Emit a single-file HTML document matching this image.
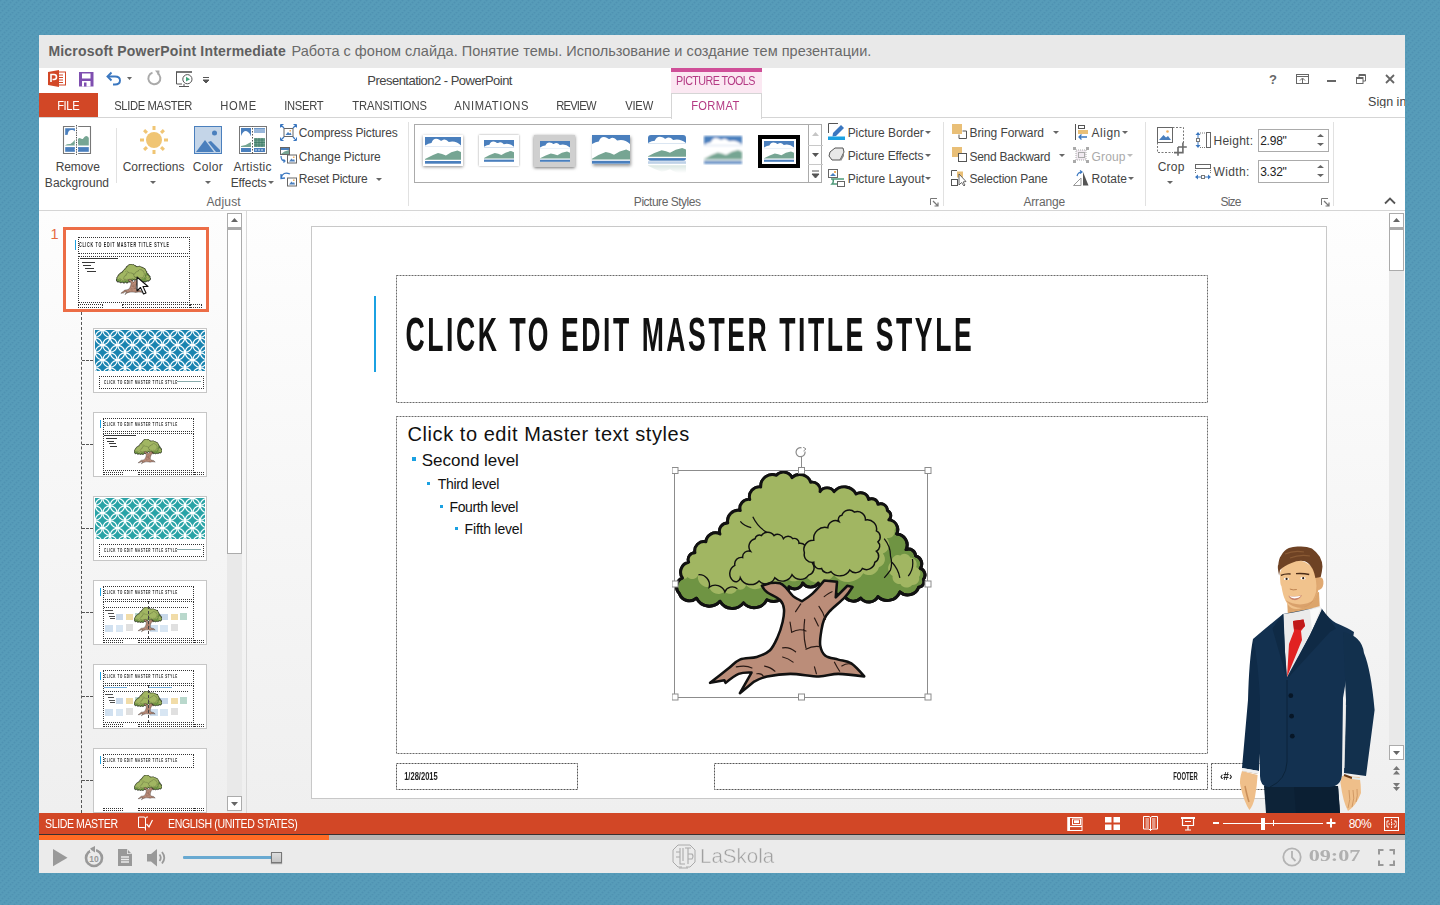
<!DOCTYPE html>
<html><head><meta charset="utf-8"><style>
html,body{margin:0;padding:0;}
body{width:1440px;height:905px;position:relative;overflow:hidden;font-family:"Liberation Sans",sans-serif;}
body>div,body>svg{position:absolute;}
.t{white-space:pre;}
</style></head><body>
<svg style="left:0px;top:0px;" width="1440" height="905" viewBox="0 0 1440 905"><defs><pattern id="bgp" x="0" y="0" width="6" height="6" patternUnits="userSpaceOnUse"><rect width="6" height="6" fill="#579cb9"/><circle cx="0.5" cy="0.5" r="1.05" fill="#4a8cae" opacity="0.6"/><circle cx="4.5" cy="2.5" r="1.05" fill="#4a8cae" opacity="0.6"/><circle cx="2.5" cy="4.5" r="1.05" fill="#4a8cae" opacity="0.6"/><circle cx="6.5" cy="0.5" r="1.05" fill="#4a8cae" opacity="0.6"/></pattern></defs><rect width="1440" height="905" fill="url(#bgp)"/></svg>
<div style="left:39px;top:35px;width:1366px;height:838px;background:#fff;"></div>
<div style="left:39px;top:35px;width:1366px;height:33px;background:#e9e9e9;"></div>
<div class="t" style="left:48.42px;top:44.10px;font-size:14px;line-height:14px;color:#5f5f5f;font-weight:bold;font-family:'Liberation Sans';letter-spacing:0.197px;">Microsoft PowerPoint Intermediate</div>
<div class="t" style="left:291.49px;top:43.67px;font-size:14.5px;line-height:14.5px;color:#6a6a6a;font-weight:normal;font-family:'Liberation Sans';letter-spacing:0.026px;">Работа с фоном слайда. Понятие темы. Использование и создание тем презентации.</div>
<div class="t" style="left:367.29px;top:73.95px;font-size:13px;line-height:13px;color:#444;font-weight:normal;font-family:'Liberation Sans';letter-spacing:-0.522px;">Presentation2 - PowerPoint</div>
<div style="left:671px;top:68px;width:91px;height:4px;background:#cf4f98;"></div>
<div style="left:671px;top:72px;width:91px;height:21px;background:#fbe8f2;"></div>
<div class="t" style="left:676.33px;top:75.17px;font-size:12.5px;line-height:12.5px;color:#b43a84;font-weight:normal;font-family:'Liberation Sans';letter-spacing:-0.671px;transform:scaleX(0.8600);transform-origin:0.88px 0;">PICTURE TOOLS</div>
<div style="left:39px;top:93px;width:59px;height:25px;background:#d24726;"></div>
<div class="t" style="left:57.09px;top:99.35px;font-size:13px;line-height:13px;color:#fff;font-weight:normal;font-family:'Liberation Sans';letter-spacing:-0.410px;transform:scaleX(0.8600);transform-origin:0.91px 0;">FILE</div>
<div style="left:39px;top:117px;width:1366px;height:1px;background:#d5d5d5;"></div>
<div class="t" style="left:114.09px;top:99.35px;font-size:13px;line-height:13px;color:#444;font-weight:normal;font-family:'Liberation Sans';letter-spacing:-0.390px;transform:scaleX(0.8600);transform-origin:0.91px 0;">SLIDE MASTER</div>
<div class="t" style="left:220.09px;top:99.35px;font-size:13px;line-height:13px;color:#444;font-weight:normal;font-family:'Liberation Sans';letter-spacing:0.979px;transform:scaleX(0.8600);transform-origin:0.91px 0;">HOME</div>
<div class="t" style="left:283.59px;top:99.35px;font-size:13px;line-height:13px;color:#444;font-weight:normal;font-family:'Liberation Sans';letter-spacing:-0.286px;transform:scaleX(0.8600);transform-origin:0.91px 0;">INSERT</div>
<div class="t" style="left:351.59px;top:99.35px;font-size:13px;line-height:13px;color:#444;font-weight:normal;font-family:'Liberation Sans';letter-spacing:-0.041px;transform:scaleX(0.8600);transform-origin:0.91px 0;">TRANSITIONS</div>
<div class="t" style="left:453.89px;top:99.35px;font-size:13px;line-height:13px;color:#444;font-weight:normal;font-family:'Liberation Sans';letter-spacing:0.726px;transform:scaleX(0.8600);transform-origin:0.91px 0;">ANIMATIONS</div>
<div class="t" style="left:556.49px;top:99.35px;font-size:13px;line-height:13px;color:#444;font-weight:normal;font-family:'Liberation Sans';letter-spacing:-0.872px;transform:scaleX(0.8600);transform-origin:0.91px 0;">REVIEW</div>
<div class="t" style="left:624.99px;top:99.35px;font-size:13px;line-height:13px;color:#444;font-weight:normal;font-family:'Liberation Sans';letter-spacing:-0.200px;transform:scaleX(0.8600);transform-origin:0.91px 0;">VIEW</div>
<div style="left:671px;top:93px;width:89px;height:25px;background:#fff;border:1px solid #d5d5d5;border-bottom:none;"></div>
<div class="t" style="left:691.49px;top:99.35px;font-size:13px;line-height:13px;color:#b43a84;font-weight:normal;font-family:'Liberation Sans';letter-spacing:0.417px;transform:scaleX(0.8600);transform-origin:0.91px 0;">FORMAT</div>
<div class="t" style="left:1368.12px;top:95.97px;font-size:12.5px;line-height:12.5px;color:#444;font-weight:normal;font-family:'Liberation Sans';width:36.9px;overflow:hidden;">Sign in</div>
<div style="left:39px;top:210px;width:1366px;height:1px;background:#d5d5d5;"></div>
<div style="left:39px;top:211px;width:208px;height:602px;background:linear-gradient(#fdfdfd,#efefef);"></div>
<div style="left:246px;top:211px;width:1px;height:602px;background:#d8d8d8;"></div>
<div style="left:247px;top:211px;width:1158px;height:602px;background:linear-gradient(#fefefe,#efefef);"></div>
<div style="left:311px;top:226px;width:1014px;height:571px;background:#fff;border:1px solid #c8c8c8;"></div>
<div style="left:39px;top:813px;width:1366px;height:21px;background:#d24726;"></div>
<div style="left:39px;top:834px;width:1366px;height:1px;background:#3a3030;"></div>
<div style="left:39px;top:835px;width:1366px;height:5px;background:#b8b6b4;"></div>
<div style="left:39px;top:835px;width:290px;height:5px;background:#ff6a23;"></div>
<div style="left:39px;top:840px;width:1366px;height:33px;background:#ebebeb;"></div>
<svg style="left:62px;top:125px;" width="30" height="31" viewBox="0 0 30 31"><g transform="translate(1,1)"><path d="M11.7 0.5 H0.5 V27.5 H11.7 M15.2 0.5 H27.5 V27.5 H15.2" fill="none" stroke="#777" stroke-width="1.1"/><path d="M2.2 2.2 H11.9 V5.3 Q10 3.5 8.6 4 Q5 3.8 4.7 8.8 L2.2 8.9Z" fill="#4a7fbd"/><path d="M2.2 19.6 L2.2 19.2 Q4 17.8 7.4 18 Q10 17 11.7 13.8 L11.9 19.6Z" fill="#76a593"/><path d="M15 19.6 L15 13 Q16 11.8 17.2 12.2 Q18.5 13.2 19.8 13 Q22 9.6 23.3 9.9 Q25.5 10.2 25.8 11.9 L25.8 19.6Z" fill="#76a593"/><rect x="2.2" y="21.1" width="9.7" height="4.7" fill="#4a7fbd"/><rect x="15" y="21.1" width="10.8" height="4.7" fill="#4a7fbd"/><circle cx="13.5" cy="18.5" r="1.8" fill="#fff"/><circle cx="13.5" cy="23.5" r="1.8" fill="#fff"/><line x1="13.5" y1="-1" x2="13.5" y2="29" stroke="#555" stroke-width="1" stroke-dasharray="1.4 1"/></g></svg>
<div class="t" style="left:55.66px;top:160.80px;font-size:12px;line-height:12px;color:#444;font-weight:normal;font-family:'Liberation Sans';letter-spacing:-0.102px;">Remove</div>
<div class="t" style="left:44.86px;top:177.10px;font-size:12px;line-height:12px;color:#444;font-weight:normal;font-family:'Liberation Sans';letter-spacing:0.015px;">Background</div>
<div style="left:116px;top:128px;width:1px;height:55px;background:#e1e1e1;"></div>
<svg style="left:140px;top:126px;" width="28" height="28" viewBox="0 0 28 28"><rect x="12.5" y="0" width="3" height="4" fill="#f0c574" transform="rotate(0 14 14)"/><rect x="12.5" y="0" width="3" height="4" fill="#f0c574" transform="rotate(45 14 14)"/><rect x="12.5" y="0" width="3" height="4" fill="#f0c574" transform="rotate(90 14 14)"/><rect x="12.5" y="0" width="3" height="4" fill="#f0c574" transform="rotate(135 14 14)"/><rect x="12.5" y="0" width="3" height="4" fill="#f0c574" transform="rotate(180 14 14)"/><rect x="12.5" y="0" width="3" height="4" fill="#f0c574" transform="rotate(225 14 14)"/><rect x="12.5" y="0" width="3" height="4" fill="#f0c574" transform="rotate(270 14 14)"/><rect x="12.5" y="0" width="3" height="4" fill="#f0c574" transform="rotate(315 14 14)"/><circle cx="14" cy="14" r="8" fill="#f0c574"/></svg>
<div class="t" style="left:122.66px;top:160.80px;font-size:12px;line-height:12px;color:#444;font-weight:normal;font-family:'Liberation Sans';letter-spacing:0.052px;">Corrections</div>
<svg style="left:150px;top:181px;" width="6" height="4" viewBox="0 0 6 4"><path d="M0 0 L6 0 L3 3Z" fill="#666"/></svg>
<svg style="left:194px;top:126px;" width="28" height="28" viewBox="0 0 28 28"><rect x="0.5" y="0.5" width="27" height="27" fill="#c4d5e8" stroke="#4a7fbd"/><circle cx="20.5" cy="7" r="2.5" fill="#4a7fbd"/><path d="M2 26 L11 14 L20 26Z" fill="#4a7fbd"/><path d="M14 16 L17 15 L26 24 L26 26 L22 26Z" fill="#4a7fbd"/></svg>
<div class="t" style="left:192.66px;top:160.80px;font-size:12px;line-height:12px;color:#444;font-weight:normal;font-family:'Liberation Sans';letter-spacing:0.323px;">Color</div>
<svg style="left:205px;top:181px;" width="6" height="4" viewBox="0 0 6 4"><path d="M0 0 L6 0 L3 3Z" fill="#666"/></svg>
<svg style="left:239px;top:126px;" width="28" height="28" viewBox="0 0 28 28"><rect x="0.5" y="0.5" width="27" height="27" fill="#fff" stroke="#777"/><rect x="2" y="2" width="10" height="8" fill="#4a7fbd"/><path d="M2 10 Q5 3 9 6 Q12 8 12 12 L12 14 L2 14Z" fill="#fff"/><path d="M2 20 Q8 19 12 16 L12 21 L2 21Z" fill="#76a593"/><rect x="2" y="22" width="10" height="4" fill="#4a7fbd"/><rect x="15" y="2" width="11" height="5" fill="#4a7fbd" opacity="0.8"/><path d="M15 4h11M15 6h11" stroke="#fff" stroke-width="0.6"/><rect x="15" y="12" width="11" height="9" fill="#76a593"/><path d="M15 14h11M15 16.5h11M15 19h11M17 12v9M20 12v9M23 12v9" stroke="#2f6f5a" stroke-width="0.6"/><rect x="15" y="22" width="11" height="4" fill="#4a7fbd"/><path d="M17 23v2M20 23v2M23 23v2" stroke="#fff" stroke-width="0.8"/><line x1="13.5" y1="-1" x2="13.5" y2="29" stroke="#555" stroke-dasharray="1.5 1.5"/></svg>
<div class="t" style="left:233.46px;top:160.80px;font-size:12px;line-height:12px;color:#444;font-weight:normal;font-family:'Liberation Sans';letter-spacing:0.297px;">Artistic</div>
<div class="t" style="left:230.66px;top:177.10px;font-size:12px;line-height:12px;color:#444;font-weight:normal;font-family:'Liberation Sans';letter-spacing:-0.098px;">Effects</div>
<svg style="left:268px;top:181px;" width="6" height="4" viewBox="0 0 6 4"><path d="M0 0 L6 0 L3 3Z" fill="#666"/></svg>
<svg style="left:280px;top:124px;" width="17" height="17" viewBox="0 0 17 17"><rect x="4.0" y="4.5" width="9" height="8" fill="#fff" stroke="#666"/><path d="M5.5 11 L8.0 8 L9.5 9.5 L10.5 8.5 L11.5 11Z" fill="#4a7fbd"/><rect x="9.5" y="6" width="1.5" height="1.5" fill="#f0b060"/><path d="M0.5 0.5 L4 4 M0.5 0.5 h3 M0.5 0.5 v3 M16.5 0.5 L13 4 M16.5 0.5 h-3 M16.5 0.5 v3 M0.5 16.5 L4 13 M0.5 16.5 h3 M0.5 16.5 v-3 M16.5 16.5 L13 13 M16.5 16.5 h-3 M16.5 16.5 v-3" stroke="#3a77c0" stroke-width="1.2" fill="none"/></svg>
<div class="t" style="left:298.86px;top:126.55px;font-size:12px;line-height:12px;color:#444;font-weight:normal;font-family:'Liberation Sans';letter-spacing:-0.156px;">Compress Pictures</div>
<svg style="left:280px;top:147px;" width="17" height="17" viewBox="0 0 17 17"><rect x="0.5" y="0.5" width="9" height="7" fill="#fff" stroke="#666"/><path d="M1 7 Q4 4 9 3 L9 7Z" fill="#76a593"/><rect x="1" y="1" width="8" height="2" fill="#4a7fbd"/><rect x="7.5" y="8.0" width="9" height="8" fill="#fff" stroke="#666"/><path d="M9 14.5 L11.5 11.5 L13 13.0 L14 12.0 L15 14.5Z" fill="#4a7fbd"/><rect x="13" y="9.5" width="1.5" height="1.5" fill="#f0b060"/><path d="M1 9 Q1 14 5 14 M3.5 12.5 L5 14 L3.5 15.5" stroke="#3a77c0" stroke-width="1.2" fill="none"/></svg>
<div class="t" style="left:298.86px;top:150.50px;font-size:12px;line-height:12px;color:#444;font-weight:normal;font-family:'Liberation Sans';letter-spacing:-0.065px;">Change Picture</div>
<svg style="left:280px;top:170px;" width="17" height="17" viewBox="0 0 17 17"><rect x="7.5" y="8.0" width="9" height="8" fill="#fff" stroke="#666"/><path d="M9 14.5 L11.5 11.5 L13 13.0 L14 12.0 L15 14.5Z" fill="#4a7fbd"/><rect x="13" y="9.5" width="1.5" height="1.5" fill="#f0b060"/><path d="M1 8 Q3 1 10 4 M1 4 L1 8.5 L5 8" stroke="#3a77c0" stroke-width="1.3" fill="none"/></svg>
<div class="t" style="left:298.86px;top:173.40px;font-size:12px;line-height:12px;color:#444;font-weight:normal;font-family:'Liberation Sans';letter-spacing:-0.263px;">Reset Picture</div>
<svg style="left:376px;top:178px;" width="6" height="4" viewBox="0 0 6 4"><path d="M0 0 L6 0 L3 3Z" fill="#666"/></svg>
<div class="t" style="left:206.46px;top:196.10px;font-size:12px;line-height:12px;color:#666;font-weight:normal;font-family:'Liberation Sans';letter-spacing:0.164px;">Adjust</div>
<div style="left:408px;top:122px;width:1px;height:84px;background:#e1e1e1;"></div>
<div style="left:414px;top:124px;width:408px;height:59px;background:#fff;border:1px solid #ababab;box-sizing:border-box;"></div>
<div style="left:808px;top:124px;width:15px;height:59px;border-left:1px solid #ababab;box-sizing:border-box;"></div>
<div style="left:808px;top:145px;width:15px;height:1px;background:#c8c8c8;"></div>
<div style="left:808px;top:164px;width:15px;height:1px;background:#c8c8c8;"></div>
<svg style="left:811px;top:131px;" width="9" height="6" viewBox="0 0 9 6"><path d="M1 5 L8 5 L4.5 1Z" fill="#c6c6c6"/></svg>
<svg style="left:811px;top:152px;" width="9" height="6" viewBox="0 0 9 6"><path d="M1 1 L8 1 L4.5 5Z" fill="#555"/></svg>
<svg style="left:811px;top:170px;" width="9" height="9" viewBox="0 0 9 9"><path d="M1 1 L8 1 M1 4 L8 4 L4.5 8Z" stroke="#555" fill="#555" stroke-width="1"/></svg>
<div style="left:423px;top:135px;width:40px;height:31px;background:#fff;box-shadow:0 1px 3px rgba(0,0,0,0.45);"></div>
<svg style="left:425px;top:137px;" width="36" height="27" viewBox="0 0 36 27"><g transform="translate(0,0)"><rect x="0" y="0" width="36" height="27" fill="#fff"/><rect x="0" y="0" width="36" height="9.2" fill="#4a7fbd"/><path d="M0 9.2 L0 8.4 Q3.6 5.9 6.5 5.9 Q8.6 0.0 14.4 2.7 Q15.8 4.3 16.9 3.5 Q20.5 1.1 23.8 5.1 Q30.6 3.2 36 8.4 L36 9.2 Z" fill="#fff"/><path d="M0 22.7 L0 22.1 Q7.2 17.8 13.0 15.9 Q17.3 16.7 20.9 18.4 Q25.9 14.6 32.4 13.5 L36 15.1 L36 22.7 Z" fill="#76a593"/><rect x="0" y="24.0" width="36" height="2.7" fill="#4a7fbd"/></g></svg>
<div style="left:479px;top:135px;width:40px;height:31px;background:#fff;box-shadow:0 0 2px rgba(0,0,0,0.4);"></div>
<svg style="left:484px;top:140px;" width="30" height="22" viewBox="0 0 30 22"><g transform="translate(0,0)"><rect x="0" y="0" width="30" height="22" fill="#fff"/><rect x="0" y="0" width="30" height="7.5" fill="#4a7fbd"/><path d="M0 7.5 L0 6.8 Q3.0 4.8 5.4 4.8 Q7.2 0.0 12.0 2.2 Q13.2 3.5 14.1 2.9 Q17.1 0.9 19.8 4.2 Q25.5 2.6 30 6.8 L30 7.5 Z" fill="#fff"/><path d="M0 18.5 L0 18.0 Q6.0 14.5 10.8 13.0 Q14.4 13.6 17.4 15.0 Q21.6 11.9 27.0 11.0 L30 12.3 L30 18.5 Z" fill="#76a593"/><rect x="0" y="19.6" width="30" height="2.2" fill="#4a7fbd"/></g></svg>
<div style="left:534px;top:135px;width:41px;height:32px;background:#cfcfcf;box-shadow:0 1px 3px rgba(0,0,0,0.55);"></div>
<svg style="left:540px;top:141px;" width="30" height="21" viewBox="0 0 30 21"><g transform="translate(0,0)"><rect x="0" y="0" width="30" height="21" fill="#fff"/><rect x="0" y="0" width="30" height="7.1" fill="#4a7fbd"/><path d="M0 7.1 L0 6.5 Q3.0 4.6 5.4 4.6 Q7.2 0.0 12.0 2.1 Q13.2 3.4 14.1 2.7 Q17.1 0.8 19.8 4.0 Q25.5 2.5 30 6.5 L30 7.1 Z" fill="#fff"/><path d="M0 17.6 L0 17.2 Q6.0 13.9 10.8 12.4 Q14.4 13.0 17.4 14.3 Q21.6 11.3 27.0 10.5 L30 11.8 L30 17.6 Z" fill="#76a593"/><rect x="0" y="18.7" width="30" height="2.1" fill="#4a7fbd"/></g></svg>
<svg style="left:592px;top:135px;box-shadow:1px 2px 3px rgba(0,0,0,0.4);" width="38" height="29" viewBox="0 0 38 29"><g transform="translate(0,0)"><rect x="0" y="0" width="38" height="29" fill="#fff"/><rect x="0" y="0" width="38" height="9.9" fill="#4a7fbd"/><path d="M0 9.9 L0 9.0 Q3.8 6.4 6.8 6.4 Q9.1 0.0 15.2 2.9 Q16.7 4.6 17.9 3.8 Q21.7 1.2 25.1 5.5 Q32.3 3.5 38 9.0 L38 9.9 Z" fill="#fff"/><path d="M0 24.4 L0 23.8 Q7.6 19.1 13.7 17.1 Q18.2 18.0 22.0 19.7 Q27.4 15.7 34.2 14.5 L38 16.2 L38 24.4 Z" fill="#76a593"/><rect x="0" y="25.8" width="38" height="2.9" fill="#4a7fbd"/></g></svg>
<svg style="left:648px;top:135px;" width="38" height="38" viewBox="0 0 38 38"><defs><linearGradient id="rf" x1="0" y1="0" x2="0" y2="1"><stop offset="0" stop-color="#fff" stop-opacity="0.2"/><stop offset="1" stop-color="#fff" stop-opacity="1"/></linearGradient><clipPath id="rc"><rect x="0" y="0" width="38" height="26" rx="3"/></clipPath></defs><g clip-path="url(#rc)"><g transform="translate(0,0)"><rect x="0" y="0" width="38" height="26" fill="#fff"/><rect x="0" y="0" width="38" height="8.8" fill="#4a7fbd"/><path d="M0 8.8 L0 8.1 Q3.8 5.7 6.8 5.7 Q9.1 0.0 15.2 2.6 Q16.7 4.2 17.9 3.4 Q21.7 1.0 25.1 4.9 Q32.3 3.1 38 8.1 L38 8.8 Z" fill="#fff"/><path d="M0 21.8 L0 21.3 Q7.6 17.2 13.7 15.3 Q18.2 16.1 22.0 17.7 Q27.4 14.0 34.2 13.0 L38 14.6 L38 21.8 Z" fill="#76a593"/><rect x="0" y="23.1" width="38" height="2.6" fill="#4a7fbd"/></g></g><g transform="translate(0,52) scale(1,-1)" opacity="0.5"><g transform="translate(0,0)"><rect x="0" y="0" width="38" height="26" fill="#fff"/><rect x="0" y="0" width="38" height="8.8" fill="#4a7fbd"/><path d="M0 8.8 L0 8.1 Q3.8 5.7 6.8 5.7 Q9.1 0.0 15.2 2.6 Q16.7 4.2 17.9 3.4 Q21.7 1.0 25.1 4.9 Q32.3 3.1 38 8.1 L38 8.8 Z" fill="#fff"/><path d="M0 21.8 L0 21.3 Q7.6 17.2 13.7 15.3 Q18.2 16.1 22.0 17.7 Q27.4 14.0 34.2 13.0 L38 14.6 L38 21.8 Z" fill="#76a593"/><rect x="0" y="23.1" width="38" height="2.6" fill="#4a7fbd"/></g></g><rect x="0" y="26" width="38" height="12" fill="url(#rf)"/></svg>
<svg style="left:703px;top:135px;" width="40" height="30" viewBox="0 0 40 30"><defs><filter id="bl" x="-10%" y="-10%" width="120%" height="120%"><feGaussianBlur stdDeviation="0.8"/></filter></defs><g filter="url(#bl)"><g transform="translate(1,1)"><rect x="0" y="0" width="38" height="28" fill="#fff"/><rect x="0" y="0" width="38" height="9.5" fill="#4a7fbd"/><path d="M0 9.5 L0 8.7 Q3.8 6.2 6.8 6.2 Q9.1 0.0 15.2 2.8 Q16.7 4.5 17.9 3.6 Q21.7 1.1 25.1 5.3 Q32.3 3.4 38 8.7 L38 9.5 Z" fill="#fff"/><path d="M0 23.5 L0 23.0 Q7.6 18.5 13.7 16.5 Q18.2 17.4 22.0 19.0 Q27.4 15.1 34.2 14.0 L38 15.7 L38 23.5 Z" fill="#76a593"/><rect x="0" y="24.9" width="38" height="2.8" fill="#4a7fbd"/></g></g></svg>
<div style="left:758px;top:135px;width:42px;height:33px;background:#000;"></div>
<div style="left:762px;top:139px;width:34px;height:25px;background:#fff;"></div>
<svg style="left:764px;top:141px;" width="30" height="21" viewBox="0 0 30 21"><g transform="translate(0,0)"><rect x="0" y="0" width="30" height="21" fill="#fff"/><rect x="0" y="0" width="30" height="7.1" fill="#4a7fbd"/><path d="M0 7.1 L0 6.5 Q3.0 4.6 5.4 4.6 Q7.2 0.0 12.0 2.1 Q13.2 3.4 14.1 2.7 Q17.1 0.8 19.8 4.0 Q25.5 2.5 30 6.5 L30 7.1 Z" fill="#fff"/><path d="M0 17.6 L0 17.2 Q6.0 13.9 10.8 12.4 Q14.4 13.0 17.4 14.3 Q21.6 11.3 27.0 10.5 L30 11.8 L30 17.6 Z" fill="#76a593"/><rect x="0" y="18.7" width="30" height="2.1" fill="#4a7fbd"/></g></svg>
<div class="t" style="left:633.86px;top:196.30px;font-size:12px;line-height:12px;color:#666;font-weight:normal;font-family:'Liberation Sans';letter-spacing:-0.483px;">Picture Styles</div>
<svg style="left:930px;top:198px;" width="10" height="10" viewBox="0 0 10 10"><path d="M0.5 7 V0.5 H7" stroke="#777" fill="none"/><path d="M3 3 L8 8 M8 4.5 V8 H4.5" stroke="#777" fill="none" stroke-width="1.2"/></svg>
<svg style="left:828px;top:123px;" width="18" height="18" viewBox="0 0 18 18"><path d="M0.5 10 V0.5 H10" stroke="#555" fill="none"/><path d="M5 10 L13 2 L16 5 L8 13 L4.5 13.5Z" fill="#3a77c0"/><rect x="0" y="13.5" width="17" height="3.5" fill="#1ba1e2"/></svg>
<div class="t" style="left:847.66px;top:126.55px;font-size:12px;line-height:12px;color:#444;font-weight:normal;font-family:'Liberation Sans';letter-spacing:-0.040px;">Picture Border</div>
<svg style="left:925px;top:131px;" width="6" height="4" viewBox="0 0 6 4"><path d="M0 0 L6 0 L3 3Z" fill="#666"/></svg>
<svg style="left:828px;top:146px;" width="18" height="18" viewBox="0 0 18 18"><path d="M2 6 L7 2 L15 2 L16 6 L12 14 L4 14 L1 10Z" fill="#e8e8e8" stroke="#555" stroke-width="1"/><path d="M12 14 L16 6 L16 10 L13 15Z" fill="#888"/></svg>
<div class="t" style="left:847.66px;top:150.05px;font-size:12px;line-height:12px;color:#444;font-weight:normal;font-family:'Liberation Sans';letter-spacing:-0.088px;">Picture Effects</div>
<svg style="left:925px;top:154px;" width="6" height="4" viewBox="0 0 6 4"><path d="M0 0 L6 0 L3 3Z" fill="#666"/></svg>
<svg style="left:828px;top:169px;" width="18" height="18" viewBox="0 0 18 18"><rect x="0.5" y="0.5" width="9" height="8" fill="#fff" stroke="#666"/><path d="M2 7 L5 4 L8 7Z" fill="#4a7fbd"/><rect x="6" y="2" width="2" height="2" fill="#f0b060"/><path d="M3 10 h13 M5 10 Q6 13 4 15 h6" stroke="#4f9a7a" stroke-width="1.5" fill="none"/><rect x="9.5" y="12.5" width="7" height="5" fill="#fff" stroke="#666"/></svg>
<div class="t" style="left:847.66px;top:173.20px;font-size:12px;line-height:12px;color:#444;font-weight:normal;font-family:'Liberation Sans';letter-spacing:0.016px;">Picture Layout</div>
<svg style="left:925px;top:177px;" width="6" height="4" viewBox="0 0 6 4"><path d="M0 0 L6 0 L3 3Z" fill="#666"/></svg>
<div style="left:943px;top:122px;width:1px;height:84px;background:#e1e1e1;"></div>
<svg style="left:952px;top:124px;" width="16" height="16" viewBox="0 0 16 16"><rect x="0" y="0" width="10" height="10" fill="#e9bf77"/><path d="M10.5 7 H14.5 V14.5 H7 V10.5" stroke="#555" fill="none"/></svg>
<div class="t" style="left:969.46px;top:126.60px;font-size:12px;line-height:12px;color:#444;font-weight:normal;font-family:'Liberation Sans';letter-spacing:-0.065px;">Bring Forward</div>
<svg style="left:1053px;top:131px;" width="6" height="4" viewBox="0 0 6 4"><path d="M0 0 L6 0 L3 3Z" fill="#666"/></svg>
<svg style="left:952px;top:147px;" width="16" height="16" viewBox="0 0 16 16"><rect x="0" y="0" width="10" height="10" fill="#e9bf77"/><rect x="6.5" y="6.5" width="8" height="8" fill="#fff" stroke="#555"/></svg>
<div class="t" style="left:969.46px;top:150.50px;font-size:12px;line-height:12px;color:#444;font-weight:normal;font-family:'Liberation Sans';letter-spacing:-0.256px;">Send Backward</div>
<svg style="left:1059px;top:154px;" width="6" height="4" viewBox="0 0 6 4"><path d="M0 0 L6 0 L3 3Z" fill="#666"/></svg>
<svg style="left:951px;top:170px;" width="17" height="17" viewBox="0 0 17 17"><path d="M0.5 6 V0.5 H6" stroke="#555" fill="none"/><rect x="0.5" y="9.5" width="6" height="6" fill="none" stroke="#555"/><rect x="6" y="1.5" width="6" height="6" fill="#e9bf77"/><path d="M8 4 L8 15 L10.5 12.5 L13 16 L14 15 L12 12 L15 11.5Z" fill="#fff" stroke="#555" stroke-width="0.9"/></svg>
<div class="t" style="left:969.46px;top:173.40px;font-size:12px;line-height:12px;color:#444;font-weight:normal;font-family:'Liberation Sans';letter-spacing:-0.196px;">Selection Pane</div>
<svg style="left:1075px;top:124px;" width="14" height="16" viewBox="0 0 14 16"><line x1="0.5" y1="0" x2="0.5" y2="16" stroke="#555"/><rect x="3.5" y="1.5" width="6" height="3" fill="#fff" stroke="#555"/><rect x="3" y="6" width="10" height="4" fill="#e9bf77"/><path d="M12 13 H4 M6.5 10.5 L4 13 L6.5 15.5" stroke="#3a77c0" stroke-width="1.3" fill="none"/></svg>
<div class="t" style="left:1091.56px;top:126.60px;font-size:12px;line-height:12px;color:#444;font-weight:normal;font-family:'Liberation Sans';letter-spacing:0.498px;">Align</div>
<svg style="left:1122px;top:131px;" width="6" height="4" viewBox="0 0 6 4"><path d="M0 0 L6 0 L3 3Z" fill="#666"/></svg>
<svg style="left:1073px;top:147px;" width="16" height="16" viewBox="0 0 16 16"><rect x="3" y="3" width="10" height="10" fill="#f1eaf1" stroke="#aaa" stroke-dasharray="1 1"/><rect x="5.5" y="5.5" width="6" height="5" fill="none" stroke="#aaa"/><path d="M0 0h3v3H0zM13 0h3v3h-3zM0 13h3v3H0zM13 13h3v3h-3z" fill="#aaa"/></svg>
<div class="t" style="left:1091.56px;top:150.50px;font-size:12px;line-height:12px;color:#aaa;font-weight:normal;font-family:'Liberation Sans';letter-spacing:0.155px;">Group</div>
<svg style="left:1127px;top:154px;" width="6" height="4" viewBox="0 0 6 4"><path d="M0 0 L6 0 L3 3Z" fill="#bbb"/></svg>
<svg style="left:1073px;top:170px;" width="16" height="16" viewBox="0 0 16 16"><path d="M0.5 15.5 L8 8 V15.5Z" fill="none" stroke="#999"/><path d="M10 2 L15.5 15.5 H10Z" fill="#555"/><path d="M4 6 Q5 2 9 2 M7 0.5 L9 2 L7 3.5" stroke="#3a77c0" stroke-width="1.2" fill="none"/></svg>
<div class="t" style="left:1091.56px;top:173.40px;font-size:12px;line-height:12px;color:#444;font-weight:normal;font-family:'Liberation Sans';letter-spacing:0.004px;">Rotate</div>
<svg style="left:1128px;top:177px;" width="6" height="4" viewBox="0 0 6 4"><path d="M0 0 L6 0 L3 3Z" fill="#666"/></svg>
<div class="t" style="left:1023.46px;top:196.30px;font-size:12px;line-height:12px;color:#666;font-weight:normal;font-family:'Liberation Sans';letter-spacing:-0.171px;">Arrange</div>
<div style="left:1145px;top:122px;width:1px;height:84px;background:#e1e1e1;"></div>
<svg style="left:1157px;top:127px;" width="30" height="29" viewBox="0 0 30 29"><rect x="0.5" y="0.5" width="15" height="15" fill="#fff" stroke="#666"/><path d="M2 13 L6.5 8 L9 10.5 L11 9 L14 13Z" fill="#4a7fbd"/><circle cx="10.5" cy="4.5" r="1.3" fill="#f0b060"/><path d="M15.5 0.5 H26.5 V16 M0.5 15.5 V25.5 H16" stroke="#777" stroke-dasharray="2 1.5" fill="none"/><path d="M21 20 H29.8 M25.9 15.5 V25.6 H17 M21 20 V28.8" stroke="#6a6a6a" stroke-width="1.6" fill="none"/></svg>
<div class="t" style="left:1157.66px;top:160.60px;font-size:12px;line-height:12px;color:#444;font-weight:normal;font-family:'Liberation Sans';letter-spacing:0.221px;">Crop</div>
<svg style="left:1167px;top:181px;" width="6" height="4" viewBox="0 0 6 4"><path d="M0 0 L6 0 L3 3Z" fill="#666"/></svg>
<svg style="left:1195px;top:132px;" width="17" height="17" viewBox="0 0 17 17"><path d="M3 0 L0.5 3 H5.5Z M3 16 L0.5 13 H5.5Z" fill="#3a77c0"/><rect x="1.5" y="6.5" width="3" height="3" fill="none" stroke="#777"/><path d="M3 3 v3 M3 10 v3" stroke="#3a77c0"/><path d="M5 1 H10 M5 15.5 H10" stroke="#777" stroke-dasharray="1 1"/><rect x="11.5" y="0.5" width="4" height="15" fill="none" stroke="#666"/></svg>
<div class="t" style="left:1213.56px;top:135.20px;font-size:12px;line-height:12px;color:#444;font-weight:normal;font-family:'Liberation Sans';letter-spacing:0.241px;">Height:</div>
<div style="left:1258px;top:129px;width:71px;height:23px;background:#fff;border:1px solid #ababab;box-sizing:border-box;"></div>
<div class="t" style="left:1260.16px;top:135.20px;font-size:12px;line-height:12px;color:#222;font-weight:normal;font-family:'Liberation Sans';letter-spacing:-0.236px;">2.98"</div>
<svg style="left:1316px;top:133px;" width="9" height="15" viewBox="0 0 9 15"><path d="M1 4 L4.5 1 L8 4Z M1 10 L8 10 L4.5 13Z" fill="#666"/></svg>
<svg style="left:1195px;top:164px;" width="17" height="17" viewBox="0 0 17 17"><rect x="0.5" y="0.5" width="15" height="4" fill="none" stroke="#666"/><path d="M0.5 6 V10 M15.5 6 V10" stroke="#777" stroke-dasharray="1 1"/><path d="M0 13 L3 10.5 V15.5Z M16 13 L13 10.5 V15.5Z" fill="#3a77c0"/><rect x="6.5" y="11.5" width="3" height="3" fill="none" stroke="#777"/><path d="M3 13 h3 M10 13 h3" stroke="#3a77c0"/></svg>
<div class="t" style="left:1213.56px;top:166.40px;font-size:12px;line-height:12px;color:#444;font-weight:normal;font-family:'Liberation Sans';letter-spacing:0.353px;">Width:</div>
<div style="left:1258px;top:160px;width:71px;height:23px;background:#fff;border:1px solid #ababab;box-sizing:border-box;"></div>
<div class="t" style="left:1260.16px;top:166.40px;font-size:12px;line-height:12px;color:#222;font-weight:normal;font-family:'Liberation Sans';letter-spacing:-0.236px;">3.32"</div>
<svg style="left:1316px;top:164px;" width="9" height="15" viewBox="0 0 9 15"><path d="M1 4 L4.5 1 L8 4Z M1 10 L8 10 L4.5 13Z" fill="#666"/></svg>
<div class="t" style="left:1220.56px;top:196.10px;font-size:12px;line-height:12px;color:#666;font-weight:normal;font-family:'Liberation Sans';letter-spacing:-0.855px;">Size</div>
<svg style="left:1321px;top:198px;" width="10" height="10" viewBox="0 0 10 10"><path d="M0.5 7 V0.5 H7" stroke="#777" fill="none"/><path d="M3 3 L8 8 M8 4.5 V8 H4.5" stroke="#777" fill="none" stroke-width="1.2"/></svg>
<div style="left:1333px;top:122px;width:1px;height:84px;background:#e1e1e1;"></div>
<svg style="left:1384px;top:197px;" width="12" height="8" viewBox="0 0 12 8"><path d="M1 6.5 L6 1.5 L11 6.5" stroke="#555" stroke-width="1.8" fill="none"/></svg>
<svg style="left:48px;top:70px;" width="18" height="17" viewBox="0 0 18 17"><rect x="8" y="2" width="9.5" height="13" fill="#fff" stroke="#d24726" stroke-width="1"/><path d="M10 5 h5 M10 7.5 h5 M10 10 h5 M10 12.5 h5" stroke="#d24726" stroke-width="1"/><path d="M0 2 L11 0 L11 17 L0 15Z" fill="#d24726"/><path d="M3 12 V4.5 H6 Q8.5 4.5 8.5 7 Q8.5 9.5 6 9.5 H4.5" stroke="#fff" stroke-width="1.6" fill="none"/></svg>
<svg style="left:79px;top:72px;" width="15" height="15" viewBox="0 0 15 15"><path d="M0 0 H14.5 V14.5 H0Z" fill="#7f4fb0"/><rect x="3" y="1.5" width="8.5" height="5" fill="#fff"/><rect x="3" y="9" width="8.5" height="5.5" fill="#fff"/><rect x="5" y="10.5" width="2.5" height="4" fill="#7f4fb0"/></svg>
<svg style="left:106px;top:71px;" width="17" height="15" viewBox="0 0 17 15"><path d="M2.5 5.5 H9 Q14 5.5 14 9.5 Q14 13.5 9 13.5 H7" stroke="#3a77c0" stroke-width="1.9" fill="none"/><path d="M5.5 1.5 L1.5 5.5 L5.5 9.5" stroke="#3a77c0" stroke-width="1.9" fill="none"/></svg>
<svg style="left:127px;top:77px;" width="6" height="4" viewBox="0 0 6 4"><path d="M0 0 L5 0 L2.5 3Z" fill="#666"/></svg>
<svg style="left:146px;top:70px;" width="16" height="16" viewBox="0 0 16 16"><path d="M11.5 3.2 A6 6 0 1 1 6.5 2.6" stroke="#aaa" stroke-width="2" fill="none"/><path d="M9 0.5 L13.5 0.5 L13 5.5Z" fill="#aaa"/></svg>
<svg style="left:175px;top:71px;" width="18" height="18" viewBox="0 0 18 18"><path d="M1 1 H17" stroke="#555" stroke-width="1.6"/><path d="M1.5 1 V13 H7" stroke="#555" stroke-width="1" fill="none"/><circle cx="12.4" cy="8.2" r="4.6" fill="#fff" stroke="#555"/><path d="M11 5.8 L15 8.2 L11 10.6Z" fill="#3fa57a"/><path d="M4 15.5 H14 M9 13 V15.5" stroke="#555" fill="none"/></svg>
<svg style="left:203px;top:77px;" width="7" height="7" viewBox="0 0 7 7"><path d="M0 0.5 H6 M0 3 L6 3 L3 6Z" stroke="#555" fill="#555" stroke-width="1"/></svg>
<svg style="left:1269px;top:74px;" width="9" height="11" viewBox="0 0 9 11"><text x="0" y="10" font-family="Liberation Sans" font-weight="bold" font-size="13" fill="#666">?</text></svg>
<svg style="left:1296px;top:74px;" width="13" height="10" viewBox="0 0 13 10"><rect x="0.5" y="0.5" width="12" height="9" fill="none" stroke="#666"/><path d="M0.5 2.5 H12.5" stroke="#666"/><path d="M6.5 9 V4.5 M4 6.5 L6.5 4 L9 6.5" stroke="#666" fill="none"/></svg>
<div style="left:1327px;top:80px;width:9px;height:2px;background:#666;"></div>
<svg style="left:1356px;top:74px;" width="10" height="10" viewBox="0 0 10 10"><rect x="0.5" y="3.5" width="6.5" height="6" fill="none" stroke="#666"/><path d="M3 3.5 V0.5 H9.5 V7 H7" stroke="#666" fill="none"/><path d="M0.5 4.5 H7 M3 1.5 H9.5" stroke="#666"/></svg>
<svg style="left:1385px;top:74px;" width="10" height="10" viewBox="0 0 10 10"><path d="M1 1 L9 9 M9 1 L1 9" stroke="#666" stroke-width="1.8"/></svg>
<svg style="left:0;top:0;width:0;height:0;position:absolute" width="0" height="0"><defs><symbol id="tree" viewBox="-3 -3 260 232"><path d="M1.7 122.8 A9.8 9.8 0 0 1 4.9 106.8 A10.3 10.3 0 0 1 11.3 90.8 A7.0 7.0 0 0 1 17.7 81.1 A9.5 9.5 0 0 1 28.9 69.9 A9.9 9.9 0 0 1 43.3 61.9 A8.3 8.3 0 0 1 51.3 50.7 A10.9 10.9 0 0 1 64.1 37.9 A8.9 8.9 0 0 1 73.8 26.6 A10.2 10.2 0 0 1 85 13.8 A12.0 12.0 0 0 1 101 1.8 A9.7 9.7 0 0 1 117 4.2 A11.8 11.8 0 0 1 136.1 9 A8.1 8.1 0 0 1 145.7 18.6 A8.6 8.6 0 0 1 160.1 18.6 A13.6 13.6 0 0 1 182.6 21 A8.4 8.4 0 0 1 195.4 26.7 A6.4 6.4 0 0 1 205 31.5 A6.9 6.9 0 0 1 214.6 37.9 A5.8 5.8 0 0 1 216.2 47.5 A9.9 9.9 0 0 1 224.2 61.9 A11.2 11.2 0 0 1 233.8 77.9 A7.0 7.0 0 0 1 243.5 84.3 A8.3 8.3 0 0 1 248.3 97.2 A7.0 7.0 0 0 1 251.5 108.4 A5.6 5.6 0 0 1 246.7 116.4 A11.9 11.9 0 0 1 227.4 121.2 A13.7 13.7 0 0 1 205 126 A10.6 10.6 0 0 1 187.4 127.6 A10.7 10.7 0 0 1 170 124 A9.0 9.0 0 0 1 158 115 A8.6 8.6 0 0 1 144 112 A9.6 9.6 0 0 1 128 112 A8.7 8.7 0 0 1 114 116 A15.7 15.7 0 0 1 91.4 129.2 A14.5 14.5 0 0 1 67.4 132.4 A14.5 14.5 0 0 1 43.3 130.8 A14.5 14.5 0 0 1 19.3 127.6 A10.9 10.9 0 0 1 1.7 122.8 Z" fill="#6f9443" stroke="#111" stroke-width="3" stroke-linejoin="round"/><path d="M4.9 106.8 A10.3 10.3 0 0 1 11.3 90.8 A7.0 7.0 0 0 1 17.7 81.1 A9.5 9.5 0 0 1 28.9 69.9 A9.9 9.9 0 0 1 43.3 61.9 A8.3 8.3 0 0 1 51.3 50.7 A10.9 10.9 0 0 1 64.1 37.9 A8.9 8.9 0 0 1 73.8 26.6 A10.2 10.2 0 0 1 85 13.8 A12.0 12.0 0 0 1 101 1.8 A9.7 9.7 0 0 1 117 4.2 A11.8 11.8 0 0 1 136.1 9 A8.1 8.1 0 0 1 145.7 18.6 A8.6 8.6 0 0 1 160.1 18.6 A13.6 13.6 0 0 1 182.6 21 A8.4 8.4 0 0 1 195.4 26.7 A6.4 6.4 0 0 1 205 31.5 A6.9 6.9 0 0 1 214.6 37.9 A5.8 5.8 0 0 1 216.2 47.5 A7.2 7.2 0 0 1 222 58 A6.8 6.8 0 0 1 214 66 A9.9 9.9 0 0 1 210 82 A8.7 8.7 0 0 1 206 96 A10.3 10.3 0 0 1 190 102 A18.0 18.0 0 0 1 160 104 A18.0 18.0 0 0 1 130 104 A12.1 12.1 0 0 1 110 106 A12.5 12.5 0 0 1 90 112 A12.1 12.1 0 0 1 70 114 A5.9 5.9 0 0 1 61 118 A8.0 8.0 0 0 1 48 121 A10.1 10.1 0 0 1 32 116 A9.8 9.8 0 0 1 21 104 A6.7 6.7 0 0 1 10 106 A3.1 3.1 0 0 1 4.9 106.8 Z" fill="#a1b662"/><path d="M219 90 A6.5 6.5 0 0 1 228 84 A6.1 6.1 0 0 1 238 86 A7.0 7.0 0 0 1 244 96 A6.3 6.3 0 0 1 247 106 A6.4 6.4 0 0 1 240 114 A7.2 7.2 0 0 1 228 113 A6.8 6.8 0 0 1 220 105 A9.0 9.0 0 0 1 219 90 Z" fill="#a1b662"/><path d="M56.9 110 A9.6 9.6 0 0 1 58.5 94 A6.8 6.8 0 0 1 66.5 86 A6.1 6.1 0 0 1 74.5 79.6 A8.3 8.3 0 0 1 79.3 66.7 A4.3 4.3 0 0 1 85.7 63.6 A7.7 7.7 0 0 1 98.6 63.6 A6.1 6.1 0 0 1 108.2 66.7 A5.8 5.8 0 0 1 117.8 66.7 A4.8 4.8 0 0 1 124.2 71.5 A6.9 6.9 0 0 1 132 80 A8.0 8.0 0 0 1 138 92 A7.6 7.6 0 0 1 134 104 A10.2 10.2 0 0 1 117 103.6 A10.7 10.7 0 0 1 99.4 106.8 A9.8 9.8 0 0 1 83.3 110 A11.7 11.7 0 0 1 64.1 106.8 A4.7 4.7 0 0 1 56.9 110 Z" fill="#a1b662" stroke="#111" stroke-width="1.5"/><path d="M129.7 81.1 A9.6 9.6 0 0 1 139.3 68.3 A11.6 11.6 0 0 1 153.7 55.5 A7.8 7.8 0 0 1 165 49.1 A4.3 4.3 0 0 1 168.1 42.7 A8.0 8.0 0 0 1 181 39.5 A8.3 8.3 0 0 1 192.2 47.5 A9.5 9.5 0 0 1 203.4 58.7 A6.8 6.8 0 0 1 205 70 A5.8 5.8 0 0 1 203.4 79.5 A6.8 6.8 0 0 1 201.8 90.8 A8.6 8.6 0 0 1 189 97.2 A7.8 7.8 0 0 1 176.1 98.8 A11.6 11.6 0 0 1 156.9 100.4 A6.1 6.1 0 0 1 147.3 97.2 A6.1 6.1 0 0 1 139.3 90.8 A8.2 8.2 0 0 1 129.7 81.1 Z" fill="#a1b662" stroke="#111" stroke-width="1.5"/><path d="M21.3 103.6 A10.5 10.5 0 0 1 32.3 116.4 A10.4 10.4 0 0 1 48.3 121.2 A8.2 8.2 0 0 1 61.1 118 " fill="none" stroke="#111" stroke-width="1.4"/><path d="M64.1 49.1 Q68 54 75.3 55.5 M76.9 44.3 Q82 55 91.3 60.3 M211.4 66.7 Q218 75 217.8 84.3 Q220 92 217.8 98.8 Q214 104 211.4 106.8 M219.4 90.8 Q226 98 227.4 106.8 M240.3 87.5 Q242 98 236 105" fill="none" stroke="#111" stroke-width="1.3"/><path d="M1.7 122.8 A9.8 9.8 0 0 1 4.9 106.8 A10.3 10.3 0 0 1 11.3 90.8 A7.0 7.0 0 0 1 17.7 81.1 A9.5 9.5 0 0 1 28.9 69.9 A9.9 9.9 0 0 1 43.3 61.9 A8.3 8.3 0 0 1 51.3 50.7 A10.9 10.9 0 0 1 64.1 37.9 A8.9 8.9 0 0 1 73.8 26.6 A10.2 10.2 0 0 1 85 13.8 A12.0 12.0 0 0 1 101 1.8 A9.7 9.7 0 0 1 117 4.2 A11.8 11.8 0 0 1 136.1 9 A8.1 8.1 0 0 1 145.7 18.6 A8.6 8.6 0 0 1 160.1 18.6 A13.6 13.6 0 0 1 182.6 21 A8.4 8.4 0 0 1 195.4 26.7 A6.4 6.4 0 0 1 205 31.5 A6.9 6.9 0 0 1 214.6 37.9 A5.8 5.8 0 0 1 216.2 47.5 A9.9 9.9 0 0 1 224.2 61.9 A11.2 11.2 0 0 1 233.8 77.9 A7.0 7.0 0 0 1 243.5 84.3 A8.3 8.3 0 0 1 248.3 97.2 A7.0 7.0 0 0 1 251.5 108.4 A5.6 5.6 0 0 1 246.7 116.4 A11.9 11.9 0 0 1 227.4 121.2 A13.7 13.7 0 0 1 205 126 A10.6 10.6 0 0 1 187.4 127.6 A10.7 10.7 0 0 1 170 124 A9.0 9.0 0 0 1 158 115 A8.6 8.6 0 0 1 144 112 A9.6 9.6 0 0 1 128 112 A8.7 8.7 0 0 1 114 116 A15.7 15.7 0 0 1 91.4 129.2 A14.5 14.5 0 0 1 67.4 132.4 A14.5 14.5 0 0 1 43.3 130.8 A14.5 14.5 0 0 1 19.3 127.6 A10.9 10.9 0 0 1 1.7 122.8 Z" fill="none" stroke="#111" stroke-width="3" stroke-linejoin="round"/><path d="M86.2 114.9 C86.2 114.9 88.4 119.1 91.5 121.5 C94.6 123.9 101.9 126.6 104.8 129.5 C107.7 132.4 108.4 135.1 108.8 138.8 C109.2 142.6 108.5 147.2 107.4 152.0 C106.3 156.8 104.3 163.0 102.1 167.9 C99.9 172.8 97.7 177.9 94.2 181.2 C90.7 184.5 86.0 186.2 80.9 187.8 C75.8 189.4 68.6 188.5 63.7 190.5 C58.9 192.5 56.9 195.7 51.8 199.7 C46.7 203.7 33.2 214.3 33.2 214.3 C33.2 214.3 47.8 211.7 47.8 211.7 C47.8 211.7 49.1 214.3 49.1 214.3 C49.1 214.3 58.0 206.9 62.4 205.1 C66.8 203.3 75.6 203.7 75.6 203.7 C75.6 203.7 63.7 224.9 63.7 224.9 C63.7 224.9 78.3 213.0 78.3 213.0 C78.3 213.0 85.3 209.0 91.5 207.7 C97.7 206.4 106.6 205.1 115.4 205.1 C124.2 205.1 136.4 207.7 144.6 207.7 C152.8 207.7 156.7 205.1 164.4 205.1 C172.1 205.1 191.0 207.7 191.0 207.7 C191.0 207.7 182.1 197.3 177.7 194.4 C173.3 191.5 168.8 191.8 164.4 190.5 C160.0 189.2 154.3 188.9 151.2 186.5 C148.1 184.1 146.6 180.3 145.9 175.9 C145.2 171.5 146.5 164.4 147.2 160.0 C147.9 155.6 148.6 152.5 149.9 149.4 C151.2 146.3 151.7 145.2 155.2 141.4 C158.7 137.6 167.0 131.0 171.0 126.8 C175.0 122.6 179.0 116.2 179.0 116.2 C179.0 116.2 173.7 114.9 173.7 114.9 C173.7 114.9 161.8 126.8 161.8 126.8 C161.8 126.8 163.1 110.9 163.1 110.9 C163.1 110.9 149.9 109.6 149.9 109.6 C149.9 109.6 141.8 119.4 138.0 122.9 C134.2 126.4 127.3 130.8 127.3 130.8 C127.3 130.8 120.8 127.7 118.1 125.5 C115.4 123.3 113.6 119.8 111.4 117.6 C109.2 115.4 107.5 113.2 104.8 112.3 C102.1 111.4 95.0 112.0 95.0 112.0 C95.0 112.0 86.2 114.9 86.2 114.9 Z" fill="#bb8d79" stroke="#111" stroke-width="2.6" stroke-linejoin="round"/><path d="M120.7 141.4 L126 133.5 M116.7 162.6 Q124 158 131.3 161.3 M115 152 L116.7 162.6 M107.4 178.5 Q114 177 120.7 182.5 M107.4 187.8 Q113 189 118.1 193.1 M131.3 179.9 Q138 176 145.9 177.2 M130 149.4 Q128 165 131.3 178.5 M81 205 Q86 204 88 208 M88.9 197.1 Q95 198 99.5 202.4 M144.6 136.1 Q149 142 151.2 149.4 M140 148 L144 156 M160.5 193.1 Q163 198 165.8 202.4 M168 197 Q173 194 177 195 M140 198 L142 205 M150 126 Q155 122 158 121 M60 198 Q70 196 76 199" fill="none" stroke="#2a1a15" stroke-width="1.2" stroke-linecap="round"/></symbol><pattern id="rings" x="0" y="0" width="15" height="15" patternUnits="userSpaceOnUse"><circle cx="0" cy="0" r="7.2" fill="none" stroke="#fff" stroke-width="1.2"/><circle cx="15" cy="0" r="7.2" fill="none" stroke="#fff" stroke-width="1.2"/><circle cx="0" cy="15" r="7.2" fill="none" stroke="#fff" stroke-width="1.2"/><circle cx="15" cy="15" r="7.2" fill="none" stroke="#fff" stroke-width="1.2"/><circle cx="7.5" cy="7.5" r="7.2" fill="none" stroke="#fff" stroke-width="1.2"/></pattern></defs></svg>
<svg style="left:396px;top:275px" width="812" height="128"><rect x="0.5" y="0.5" width="811" height="127" fill="none" stroke="#6a6a6a" stroke-width="1" stroke-dasharray="2 1"/></svg>
<div style="left:374px;top:296px;width:2px;height:76px;background:#1ba1e2;"></div>
<div class="t" style="left:404.18px;top:311.02px;font-size:47.5px;line-height:47.5px;color:#111;font-weight:bold;font-family:'Liberation Sans';letter-spacing:4.553px;transform:scaleX(0.5600);transform-origin:3.33px 0;">CLICK TO EDIT MASTER TITLE STYLE</div>
<svg style="left:396px;top:416px" width="812" height="338"><rect x="0.5" y="0.5" width="811" height="337" fill="none" stroke="#6a6a6a" stroke-width="1" stroke-dasharray="2 1"/></svg>
<div class="t" style="left:407.60px;top:423.80px;font-size:20px;line-height:20px;color:#111;font-weight:normal;font-family:'Liberation Sans';letter-spacing:0.551px;">Click to edit Master text styles</div>
<div style="left:412px;top:457px;width:4px;height:4px;background:#1ba1e2;"></div>
<div class="t" style="left:421.81px;top:452.15px;font-size:17px;line-height:17px;color:#111;font-weight:normal;font-family:'Liberation Sans';letter-spacing:-0.024px;">Second level</div>
<div style="left:427px;top:482px;width:3px;height:3px;background:#1ba1e2;"></div>
<div class="t" style="left:437.72px;top:476.90px;font-size:14px;line-height:14px;color:#111;font-weight:normal;font-family:'Liberation Sans';letter-spacing:-0.303px;">Third level</div>
<div style="left:440px;top:505px;width:3px;height:3px;background:#1ba1e2;"></div>
<div class="t" style="left:449.52px;top:500.00px;font-size:14px;line-height:14px;color:#111;font-weight:normal;font-family:'Liberation Sans';letter-spacing:-0.400px;">Fourth level</div>
<div style="left:455px;top:527px;width:3px;height:3px;background:#1ba1e2;"></div>
<div class="t" style="left:464.62px;top:521.50px;font-size:14px;line-height:14px;color:#111;font-weight:normal;font-family:'Liberation Sans';letter-spacing:-0.196px;">Fifth level</div>
<svg style="left:396px;top:763px" width="182" height="27"><rect x="0.5" y="0.5" width="181" height="26" fill="none" stroke="#555" stroke-width="1" stroke-dasharray="2 1"/></svg>
<div class="t" style="left:404.30px;top:771.50px;font-size:10px;line-height:10px;color:#222;font-weight:bold;font-family:'Liberation Sans';transform:scaleX(0.7541);transform-origin:0.70px 0;">1/28/2015</div>
<svg style="left:714px;top:763px" width="494" height="27"><rect x="0.5" y="0.5" width="493" height="26" fill="none" stroke="#555" stroke-width="1" stroke-dasharray="2 1"/></svg>
<div class="t" style="left:1172.90px;top:771.50px;font-size:10px;line-height:10px;color:#222;font-weight:bold;font-family:'Liberation Sans';transform:scaleX(0.5860);transform-origin:0.70px 0;">FOOTER</div>
<svg style="left:1211px;top:763px" width="90" height="27"><rect x="0.5" y="0.5" width="89" height="26" fill="none" stroke="#555" stroke-width="1" stroke-dasharray="2 1"/></svg>
<div class="t" style="left:1220.30px;top:771.50px;font-size:10px;line-height:10px;color:#222;font-weight:bold;font-family:'Liberation Sans';transform:scaleX(1.0153);transform-origin:0.70px 0;">‹#›</div>
<svg style="left:672px;top:447px;" width="260" height="254" viewBox="0 0 260 254"><use href="#tree" x="2.75" y="23.4" width="254" height="227"/><rect x="2.5" y="23.5" width="253" height="227" fill="none" stroke="#8c8c8c" stroke-width="1"/><line x1="129.5" y1="9" x2="129.5" y2="23" stroke="#8c8c8c"/><path d="M133 4.5 A4.5 4.5 0 1 1 129.5 0.8" fill="none" stroke="#8c8c8c" stroke-width="1.2"/><path d="M131 0 L134 2 L131.5 4" fill="none" stroke="#8c8c8c"/><rect x="0" y="20.5" width="6" height="6" fill="#fff" stroke="#8c8c8c"/><rect x="0" y="134" width="6" height="6" fill="#fff" stroke="#8c8c8c"/><rect x="0" y="247" width="6" height="6" fill="#fff" stroke="#8c8c8c"/><rect x="126.5" y="20.5" width="6" height="6" fill="#fff" stroke="#8c8c8c"/><rect x="126.5" y="247" width="6" height="6" fill="#fff" stroke="#8c8c8c"/><rect x="253" y="20.5" width="6" height="6" fill="#fff" stroke="#8c8c8c"/><rect x="253" y="134" width="6" height="6" fill="#fff" stroke="#8c8c8c"/><rect x="253" y="247" width="6" height="6" fill="#fff" stroke="#8c8c8c"/></svg>
<div style="left:227px;top:213px;width:15px;height:600px;background:#e9e9e9;"></div>
<div style="left:227px;top:213px;width:15px;height:15px;background:#fff;border:1px solid #ababab;box-sizing:border-box;"></div>
<svg style="left:230px;top:217px;" width="9" height="6" viewBox="0 0 9 6"><path d="M1 5 L8 5 L4.5 1Z" fill="#666"/></svg>
<div style="left:227px;top:228px;width:15px;height:326px;background:#fff;border:1px solid #ababab;border-top:2px solid #aaa;box-sizing:border-box;"></div>
<div style="left:227px;top:796px;width:15px;height:15px;background:#fff;border:1px solid #ababab;box-sizing:border-box;"></div>
<svg style="left:230px;top:801px;" width="9" height="6" viewBox="0 0 9 6"><path d="M1 1 L8 1 L4.5 5Z" fill="#666"/></svg>
<div style="left:81px;top:312px;width:1px;height:501px;border-left:1px dashed #555;"></div>
<div style="left:82px;top:360px;width:11px;height:1px;border-top:1px dashed #555;"></div>
<div style="left:82px;top:444px;width:11px;height:1px;border-top:1px dashed #555;"></div>
<div style="left:82px;top:528px;width:11px;height:1px;border-top:1px dashed #555;"></div>
<div style="left:82px;top:612px;width:11px;height:1px;border-top:1px dashed #555;"></div>
<div style="left:82px;top:696px;width:11px;height:1px;border-top:1px dashed #555;"></div>
<div style="left:82px;top:780px;width:11px;height:1px;border-top:1px dashed #555;"></div>
<div class="t" style="left:50.48px;top:227.38px;font-size:14.5px;line-height:14.5px;color:#e5693f;font-weight:normal;font-family:'Liberation Sans';">1</div>
<div style="left:63px;top:227px;width:146px;height:85px;border:3px solid #ec6d46;box-sizing:border-box;background:#fff;"></div>
<div style="left:77.7px;top:236.9px;width:111.9px;height:17.4px;border:1px dotted #333;box-sizing:border-box;"></div>
<div style="left:74.8px;top:239.7px;width:0.3px;height:10.5px;background:#1ba1e2;min-width:1px;"></div>
<div class="t" style="left:79.4px;top:241.6px;font-size:6.55px;line-height:6.55px;font-weight:bold;color:#222;letter-spacing:1.31px;transform:scaleX(0.56);transform-origin:0 0;">CLICK TO EDIT MASTER TITLE STYLE</div>
<div style="left:77.7px;top:256.2px;width:111.9px;height:46.5px;border:1px dotted #333;box-sizing:border-box;"></div>
<div style="left:77.7px;top:304.1px;width:25.0px;height:3.7px;border:1px dotted #333;box-sizing:border-box;"></div>
<div style="left:121.6px;top:304.1px;width:68.0px;height:3.7px;border:1px dotted #333;box-sizing:border-box;"></div>
<div style="left:190.1px;top:304.1px;width:11.7px;height:3.7px;border:1px dotted #333;box-sizing:border-box;"></div>
<div style="left:79.8px;top:258.3px;width:38.6px;height:1px;background:#222;opacity:0.9"></div>
<div style="left:81.9px;top:262.0px;width:13.1px;height:1px;background:#222;opacity:0.9"></div>
<div style="left:83.2px;top:265.3px;width:8.3px;height:1px;background:#222;opacity:0.9"></div>
<div style="left:85.3px;top:268.3px;width:9.0px;height:1px;background:#222;opacity:0.9"></div>
<div style="left:87.4px;top:271.4px;width:8.3px;height:1px;background:#222;opacity:0.9"></div>
<svg style="left:116.1px;top:263.7px" width="35.0" height="31.3"><use href="#tree" width="35.0" height="31.3"/></svg>
<svg style="left:136px;top:276px;" width="14" height="20" viewBox="0 0 14 20"><path d="M1 1 L1 15 L4.5 11.5 L7.5 18 L10 17 L7 10.5 L12 10.5Z" fill="#fff" stroke="#111" stroke-width="1.1" stroke-linejoin="round"/></svg>
<div style="left:93px;top:328px;width:114px;height:65px;background:#fff;border:1px solid #c6c6c6;box-sizing:border-box;"></div>
<svg style="left:95px;top:330px" width="110" height="41"><rect width="100%" height="100%" fill="#1a84b0"/><rect width="100%" height="100%" fill="url(#rings)"/></svg>
<div style="left:98.6px;top:376.3px;width:105.0px;height:12.9px;border:1px dotted #333;box-sizing:border-box;"></div>
<div class="t" style="left:103.9px;top:379.6px;font-size:5.33px;line-height:5.33px;font-weight:bold;color:#222;letter-spacing:1.07px;transform:scaleX(0.56);transform-origin:0 0;">CLICK TO EDIT MASTER TITLE STYLE</div>
<div style="left:177.2px;top:380.8px;width:23.6px;height:1.1px;border-top:1px solid #8aa;"></div>
<div style="left:93px;top:412px;width:114px;height:65px;background:#fff;border:1px solid #c6c6c6;box-sizing:border-box;"></div>
<div style="left:102.5px;top:417.6px;width:91.1px;height:14.2px;border:1px dotted #333;box-sizing:border-box;"></div>
<div style="left:100.2px;top:419.9px;width:0.2px;height:8.5px;background:#1ba1e2;min-width:1px;"></div>
<div class="t" style="left:103.9px;top:421.5px;font-size:5.33px;line-height:5.33px;font-weight:bold;color:#222;letter-spacing:1.07px;transform:scaleX(0.56);transform-origin:0 0;">CLICK TO EDIT MASTER TITLE STYLE</div>
<div style="left:102.5px;top:433.3px;width:91.1px;height:37.9px;border:1px dotted #333;box-sizing:border-box;"></div>
<div style="left:102.5px;top:472.3px;width:20.3px;height:3.0px;border:1px dotted #333;box-sizing:border-box;"></div>
<div style="left:138.3px;top:472.3px;width:55.4px;height:3.0px;border:1px dotted #333;box-sizing:border-box;"></div>
<div style="left:194.1px;top:472.3px;width:9.5px;height:3.0px;border:1px dotted #333;box-sizing:border-box;"></div>
<div style="left:104.2px;top:435.0px;width:31.4px;height:1px;background:#222;opacity:0.9"></div>
<div style="left:105.9px;top:438.1px;width:10.7px;height:1px;background:#222;opacity:0.9"></div>
<div style="left:107.0px;top:440.8px;width:6.7px;height:1px;background:#222;opacity:0.9"></div>
<div style="left:108.7px;top:443.2px;width:7.3px;height:1px;background:#222;opacity:0.9"></div>
<div style="left:110.4px;top:445.7px;width:6.7px;height:1px;background:#222;opacity:0.9"></div>
<svg style="left:133.8px;top:439.4px" width="28.5" height="25.5"><use href="#tree" width="28.5" height="25.5"/></svg>
<div style="left:93px;top:496px;width:114px;height:65px;background:#fff;border:1px solid #c6c6c6;box-sizing:border-box;"></div>
<svg style="left:95px;top:498px" width="110" height="41"><rect width="100%" height="100%" fill="#29a3a6"/><rect width="100%" height="100%" fill="url(#rings)"/></svg>
<div style="left:98.6px;top:544.3px;width:105.0px;height:12.9px;border:1px dotted #333;box-sizing:border-box;"></div>
<div class="t" style="left:103.9px;top:547.6px;font-size:5.33px;line-height:5.33px;font-weight:bold;color:#222;letter-spacing:1.07px;transform:scaleX(0.56);transform-origin:0 0;">CLICK TO EDIT MASTER TITLE STYLE</div>
<div style="left:177.2px;top:548.8px;width:23.6px;height:1.1px;border-top:1px solid #8aa;"></div>
<div style="left:93px;top:580px;width:114px;height:65px;background:#fff;border:1px solid #c6c6c6;box-sizing:border-box;"></div>
<div style="left:102.5px;top:585.6px;width:91.1px;height:14.2px;border:1px dotted #333;box-sizing:border-box;"></div>
<div style="left:100.2px;top:587.9px;width:0.2px;height:8.5px;background:#1ba1e2;min-width:1px;"></div>
<div class="t" style="left:103.9px;top:589.5px;font-size:5.33px;line-height:5.33px;font-weight:bold;color:#222;letter-spacing:1.07px;transform:scaleX(0.56);transform-origin:0 0;">CLICK TO EDIT MASTER TITLE STYLE</div>
<div style="left:102.5px;top:601.3px;width:91.1px;height:37.9px;border:1px dotted #333;box-sizing:border-box;"></div>
<div style="left:102.5px;top:640.3px;width:20.3px;height:3.0px;border:1px dotted #333;box-sizing:border-box;"></div>
<div style="left:138.3px;top:640.3px;width:55.4px;height:3.0px;border:1px dotted #333;box-sizing:border-box;"></div>
<div style="left:194.1px;top:640.3px;width:9.5px;height:3.0px;border:1px dotted #333;box-sizing:border-box;"></div>
<div style="left:104.2px;top:607.0px;width:39.3px;height:2px;border-top:1px dotted #222;opacity:0.9"></div>
<div style="left:105.4px;top:610.3px;width:7.9px;height:1px;background:#222;opacity:0.8"></div>
<div style="left:107.6px;top:613.1px;width:6.2px;height:1px;background:#222;opacity:0.8"></div>
<div style="left:109.3px;top:615.7px;width:5.6px;height:1px;background:#222;opacity:0.8"></div>
<div style="left:110.4px;top:618.2px;width:5.1px;height:1px;background:#222;opacity:0.8"></div>
<div style="left:115.5px;top:613.7px;width:7.9px;height:6.7px;background:#c8d8ea;"></div>
<div style="left:125.6px;top:613.7px;width:7.9px;height:6.7px;background:#f1dca8;"></div>
<div style="left:134.6px;top:613.1px;width:7.9px;height:6.7px;background:#b9d8cc;"></div>
<div style="left:105.4px;top:624.9px;width:7.9px;height:6.7px;background:#d0e0f0;"></div>
<div style="left:115.5px;top:624.9px;width:7.9px;height:6.7px;background:#d8e6f3;"></div>
<div style="left:125.6px;top:624.4px;width:7.9px;height:6.7px;background:#e0e0e0;"></div>
<div style="left:149.2px;top:607.0px;width:39.3px;height:2px;border-top:1px dotted #222;opacity:0.9"></div>
<div style="left:150.3px;top:610.3px;width:7.9px;height:1px;background:#222;opacity:0.8"></div>
<div style="left:152.5px;top:613.1px;width:6.2px;height:1px;background:#222;opacity:0.8"></div>
<div style="left:154.2px;top:615.7px;width:5.6px;height:1px;background:#222;opacity:0.8"></div>
<div style="left:155.3px;top:618.2px;width:5.1px;height:1px;background:#222;opacity:0.8"></div>
<div style="left:160.4px;top:613.7px;width:7.9px;height:6.7px;background:#c8d8ea;"></div>
<div style="left:170.5px;top:613.7px;width:7.9px;height:6.7px;background:#f1dca8;"></div>
<div style="left:179.5px;top:613.1px;width:7.9px;height:6.7px;background:#b9d8cc;"></div>
<div style="left:150.3px;top:624.9px;width:7.9px;height:6.7px;background:#d0e0f0;"></div>
<div style="left:160.4px;top:624.9px;width:7.9px;height:6.7px;background:#d8e6f3;"></div>
<div style="left:170.5px;top:624.4px;width:7.9px;height:6.7px;background:#e0e0e0;"></div>
<svg style="left:133.8px;top:607.4px" width="28.5" height="25.5"><use href="#tree" width="28.5" height="25.5"/></svg>
<div style="left:148.0px;top:601.3px;width:0.2px;height:37.9px;border-left:1px dashed #444;"></div>
<div style="left:93px;top:664px;width:114px;height:65px;background:#fff;border:1px solid #c6c6c6;box-sizing:border-box;"></div>
<div style="left:102.5px;top:669.6px;width:91.1px;height:14.2px;border:1px dotted #333;box-sizing:border-box;"></div>
<div style="left:100.2px;top:671.9px;width:0.2px;height:8.5px;background:#1ba1e2;min-width:1px;"></div>
<div class="t" style="left:103.9px;top:673.5px;font-size:5.33px;line-height:5.33px;font-weight:bold;color:#222;letter-spacing:1.07px;transform:scaleX(0.56);transform-origin:0 0;">CLICK TO EDIT MASTER TITLE STYLE</div>
<div style="left:102.5px;top:685.3px;width:91.1px;height:37.9px;border:1px dotted #333;box-sizing:border-box;"></div>
<div style="left:102.5px;top:724.3px;width:20.3px;height:3.0px;border:1px dotted #333;box-sizing:border-box;"></div>
<div style="left:138.3px;top:724.3px;width:55.4px;height:3.0px;border:1px dotted #333;box-sizing:border-box;"></div>
<div style="left:194.1px;top:724.3px;width:9.5px;height:3.0px;border:1px dotted #333;box-sizing:border-box;"></div>
<div style="left:104.2px;top:687.0px;width:22.5px;height:1px;background:#3a8fd0;opacity:0.7"></div>
<div style="left:104.2px;top:691.0px;width:39.3px;height:2px;border-top:1px dotted #222;opacity:0.9"></div>
<div style="left:105.4px;top:694.3px;width:7.9px;height:1px;background:#222;opacity:0.8"></div>
<div style="left:107.6px;top:697.1px;width:6.2px;height:1px;background:#222;opacity:0.8"></div>
<div style="left:109.3px;top:699.7px;width:5.6px;height:1px;background:#222;opacity:0.8"></div>
<div style="left:110.4px;top:702.2px;width:5.1px;height:1px;background:#222;opacity:0.8"></div>
<div style="left:115.5px;top:697.7px;width:7.9px;height:6.7px;background:#c8d8ea;"></div>
<div style="left:125.6px;top:697.7px;width:7.9px;height:6.7px;background:#f1dca8;"></div>
<div style="left:134.6px;top:697.1px;width:7.9px;height:6.7px;background:#b9d8cc;"></div>
<div style="left:105.4px;top:708.9px;width:7.9px;height:6.7px;background:#d0e0f0;"></div>
<div style="left:115.5px;top:708.9px;width:7.9px;height:6.7px;background:#d8e6f3;"></div>
<div style="left:125.6px;top:708.4px;width:7.9px;height:6.7px;background:#e0e0e0;"></div>
<div style="left:149.2px;top:687.0px;width:22.5px;height:1px;background:#3a8fd0;opacity:0.7"></div>
<div style="left:149.2px;top:691.0px;width:39.3px;height:2px;border-top:1px dotted #222;opacity:0.9"></div>
<div style="left:150.3px;top:694.3px;width:7.9px;height:1px;background:#222;opacity:0.8"></div>
<div style="left:152.5px;top:697.1px;width:6.2px;height:1px;background:#222;opacity:0.8"></div>
<div style="left:154.2px;top:699.7px;width:5.6px;height:1px;background:#222;opacity:0.8"></div>
<div style="left:155.3px;top:702.2px;width:5.1px;height:1px;background:#222;opacity:0.8"></div>
<div style="left:160.4px;top:697.7px;width:7.9px;height:6.7px;background:#c8d8ea;"></div>
<div style="left:170.5px;top:697.7px;width:7.9px;height:6.7px;background:#f1dca8;"></div>
<div style="left:179.5px;top:697.1px;width:7.9px;height:6.7px;background:#b9d8cc;"></div>
<div style="left:150.3px;top:708.9px;width:7.9px;height:6.7px;background:#d0e0f0;"></div>
<div style="left:160.4px;top:708.9px;width:7.9px;height:6.7px;background:#d8e6f3;"></div>
<div style="left:170.5px;top:708.4px;width:7.9px;height:6.7px;background:#e0e0e0;"></div>
<svg style="left:133.8px;top:691.4px" width="28.5" height="25.5"><use href="#tree" width="28.5" height="25.5"/></svg>
<div style="left:148.0px;top:685.3px;width:0.2px;height:37.9px;border-left:1px dashed #444;"></div>
<div style="left:93px;top:748px;width:114px;height:65px;background:#fff;border:1px solid #c6c6c6;box-sizing:border-box;"></div>
<div style="left:102.5px;top:753.6px;width:91.1px;height:14.2px;border:1px dotted #333;box-sizing:border-box;"></div>
<div style="left:100.2px;top:755.9px;width:0.2px;height:8.5px;background:#1ba1e2;min-width:1px;"></div>
<div class="t" style="left:103.9px;top:757.5px;font-size:5.33px;line-height:5.33px;font-weight:bold;color:#222;letter-spacing:1.07px;transform:scaleX(0.56);transform-origin:0 0;">CLICK TO EDIT MASTER TITLE STYLE</div>
<div style="left:102.5px;top:808.3px;width:20.3px;height:3.0px;border:1px dotted #333;box-sizing:border-box;"></div>
<div style="left:138.3px;top:808.3px;width:55.4px;height:3.0px;border:1px dotted #333;box-sizing:border-box;"></div>
<div style="left:194.1px;top:808.3px;width:9.5px;height:3.0px;border:1px dotted #333;box-sizing:border-box;"></div>
<svg style="left:133.8px;top:775.4px" width="28.5" height="25.5"><use href="#tree" width="28.5" height="25.5"/></svg>
<div style="left:1389px;top:213px;width:15px;height:532px;background:#e9e9e9;"></div>
<div style="left:1389px;top:213px;width:15px;height:15px;background:#fff;border:1px solid #ababab;box-sizing:border-box;"></div>
<svg style="left:1392px;top:217px;" width="9" height="6" viewBox="0 0 9 6"><path d="M1 5 L8 5 L4.5 1Z" fill="#666"/></svg>
<div style="left:1389px;top:228px;width:15px;height:43px;background:#fff;border:1px solid #ababab;border-top:2px solid #aaa;box-sizing:border-box;"></div>
<div style="left:1389px;top:745px;width:15px;height:15px;background:#fff;border:1px solid #ababab;box-sizing:border-box;"></div>
<svg style="left:1392px;top:750px;" width="9" height="6" viewBox="0 0 9 6"><path d="M1 1 L8 1 L4.5 5Z" fill="#666"/></svg>
<svg style="left:1392px;top:765px;" width="9" height="10" viewBox="0 0 9 10"><path d="M1 5 L8 5 L4.5 1Z M1 9.5 L8 9.5 L4.5 5.5Z" fill="#777"/></svg>
<svg style="left:1392px;top:782px;" width="9" height="10" viewBox="0 0 9 10"><path d="M1 1 L8 1 L4.5 5Z M1 5 L8 5 L4.5 9Z" fill="#777"/></svg>
<svg style="left:1230px;top:540px;" width="160" height="273" viewBox="0 0 160 273"><path d="M34 246 L108 246 L110 273 L36 273Z" fill="#0d2338"/><path d="M64 246 L108 246 L110 273 L66 273Z" fill="#0b1f33"/><path d="M12 231 Q9 240 10.4 246 Q14 262 19.4 270 Q23 266 25 257 Q27 246 27.6 235 Z" fill="#efbf8a"/><path d="M15 246 Q17 256 19 262" stroke="#c98f5a" stroke-width="1.5" fill="none"/><path d="M13 230 L28 233" stroke="#9a6a3a" stroke-width="2"/><path d="M112 236 Q110 244 110.5 243 Q113 262 118 271 Q126 266 131 253 Q131 245 129.7 237 Z" fill="#efbf8a"/><path d="M119 250 Q121 260 118 268 M123 250 Q125 258 122 267 M127 249 Q128 256 126 262" stroke="#c98f5a" stroke-width="0.8" fill="none"/><path d="M114 235 L122 238" stroke="#6a3a15" stroke-width="2"/><path d="M122 238 L130 239" stroke="#dfe8ea" stroke-width="2"/><path d="M57 58 L58 78 L90 72 L89 52Z" fill="#dca56c"/><path d="M23 99 Q19 120 18 160 L12 228 L29 231 L33 160 Q34 120 30 100Z" fill="#0f2b48"/><path d="M12 228 L29 231 L28 234 L12 231Z" fill="#f0f0f0"/><path d="M23 99 Q36 88 53 74 L90 67 Q100 80 106 83 Q118 88 124 92 L113 158 L112 233 Q112 246 100 247 L38 247 Q30 246 30 236 L30 160 Q28 120 23 99Z" fill="#133150"/><path d="M57 140 L57 222 Q56 240 40 247" stroke="#0b2238" stroke-width="0.9" fill="none"/><path d="M113 92 Q132 96 134 113 Q141 130 144.6 170 L136 236 L114 233 L116 160 Z" fill="#12304d"/><path d="M115.5 165 L114 228" stroke="#e8e8e8" stroke-width="1.2" fill="none" opacity="0.8"/><path d="M53.5 74 Q70 72 90 66 L92 70 L80 95 L57 137 L55 112Z" fill="#ebebeb"/><path d="M80 70 L91 67 L82 90Z" fill="#fafafa"/><path d="M63 81 L73.5 79.5 L75 86 L71 91 L72 100 L57 137 L59 104 L64 91Z" fill="#e12222"/><path d="M63 81 L73.5 79.5 L75 86 L70 90 L64 89Z" fill="#c01a1a"/><path d="M53 74 L42.4 88.4 L56.6 138 L55 112Z" fill="#0f2a45"/><path d="M92 69 L106 88.4 L100 92 L57 139 L80 95Z" fill="#0f2a45"/><circle cx="60.8" cy="155.7" r="2.4" fill="#071626"/><circle cx="61.6" cy="176.2" r="2.4" fill="#071626"/><circle cx="62.3" cy="196.2" r="2.4" fill="#071626"/><path d="M50 33.6 Q50 46 51.4 46 Q53 56 55.3 60.1 Q58 66 61.5 68.1 Q66 70 72.1 68.1 Q79 65 82.7 61.9 Q86 57 88 51.3 Q90 45 89.8 38 Q80 20 66 20 Q52 22 50 33.6Z" fill="#f1c38d"/><path d="M81 26 Q88 40 86 52 Q84 60 78 66 Q84 64 88 51.3 Q90 45 89.8 38Z" fill="#dfa870"/><path d="M55 60 Q62 68 72 68 Q80 66 84 60 Q78 64 70 64.5 Q62 64 55 60Z" fill="#c98a55" opacity="0.6"/><path d="M88.5 37.5 Q94 36 93.4 44 Q92.5 50 87.5 50Z" fill="#e0a972"/><path d="M49.1 35.4 Q47 26 48.3 24.8 Q49 18 50.9 15.9 Q54 10 58.9 8 Q64 6 70.4 6.6 Q77 6.5 81.9 8.4 Q87 12 89.8 16.8 Q92.5 22 92.5 26.5 Q92 32 90.7 37.1 L85.4 38 Q84 30 81 26.5 Q78 22 74.8 21.2 Q68 20 61.5 23 Q54 26 50 30Z" fill="#6e4224"/><path d="M55 14 Q64 10 74 12 M60 18 Q70 14 80 16" stroke="#8a5a34" stroke-width="1.2" fill="none"/><path d="M50.9 35.4 Q55 33.5 60.6 34 M66 33.6 Q73 33 79.2 34.5" stroke="#4a2c18" stroke-width="1.4" fill="none"/><ellipse cx="56.4" cy="38.9" rx="2.6" ry="1.2" fill="#fff"/><ellipse cx="73" cy="38.2" rx="2.6" ry="1.2" fill="#fff"/><circle cx="56.6" cy="38.9" r="1.1" fill="#2a1a10"/><circle cx="73.2" cy="38.2" r="1.1" fill="#2a1a10"/><path d="M59.8 49 Q63 50.5 66.8 49.5" stroke="#b77a48" stroke-width="0.9" fill="none"/><path d="M58.4 55.7 Q65 57 72.1 55.3 Q69 60.5 64.2 60.1 Q60 59.5 58.4 55.7Z" fill="#c9836a"/><path d="M59.2 56 Q65 57.2 71.2 55.7 Q69 58.2 64.5 58.4 Q61 58.2 59.2 56Z" fill="#fff"/></svg>
<div class="t" style="left:45.46px;top:818.00px;font-size:12px;line-height:12px;color:#fff;font-weight:normal;font-family:'Liberation Sans';letter-spacing:-0.469px;transform:scaleX(0.8800);transform-origin:0.84px 0;">SLIDE MASTER</div>
<svg style="left:138px;top:816px;" width="15" height="15" viewBox="0 0 15 15"><path d="M0.5 1 H6 Q7.5 1 7.5 3 V13 Q7.5 11.5 6 11.5 H0.5Z M7.5 3 Q7.5 1 9 1 H10" stroke="#fff" fill="none"/><path d="M8.5 8 L11 11 L14.5 4" stroke="#fff" fill="none" stroke-width="1.2"/><path d="M7.5 13 V14.5" stroke="#fff"/></svg>
<div class="t" style="left:168.36px;top:818.00px;font-size:12px;line-height:12px;color:#fff;font-weight:normal;font-family:'Liberation Sans';letter-spacing:-0.439px;transform:scaleX(0.8800);transform-origin:0.84px 0;">ENGLISH (UNITED STATES)</div>
<svg style="left:1067px;top:817px;" width="16" height="14" viewBox="0 0 16 14"><rect x="1" y="0.5" width="14" height="13" fill="none" stroke="#fff"/><rect x="0.5" y="0" width="2.5" height="14" fill="#fff"/><rect x="5.5" y="2" width="8" height="5.5" fill="none" stroke="#fff"/><rect x="7" y="3.3" width="5" height="2.8" fill="#fff"/><path d="M3 9.5 H15" stroke="#fff" stroke-width="1.2"/></svg>
<svg style="left:1105px;top:817px;" width="15" height="13" viewBox="0 0 15 13"><rect x="0" y="0" width="6.5" height="5.5" fill="#fff"/><rect x="8.5" y="0" width="6.5" height="5.5" fill="#fff"/><rect x="0" y="7.5" width="6.5" height="5.5" fill="#fff"/><rect x="8.5" y="7.5" width="6.5" height="5.5" fill="#fff"/></svg>
<svg style="left:1143px;top:816px;" width="15" height="16" viewBox="0 0 15 16"><path d="M0.5 0.5 H6 L7.5 1.5 L9 0.5 H14.5 V13 H9 L7.5 14.5 L6 13 H0.5Z" fill="none" stroke="#fff"/><path d="M7.5 1.5 V15" stroke="#fff"/><path d="M2.5 3 H6 M2.5 5 H6 M2.5 7 H6 M2.5 9 H6 M2.5 11 H6 M9 3 H12.5 M9 5 H12.5 M9 7 H12.5 M9 9 H12.5 M9 11 H12.5" stroke="#fff" stroke-width="0.9"/></svg>
<svg style="left:1181px;top:817px;" width="14" height="14" viewBox="0 0 14 14"><rect x="0" y="0" width="14" height="2" fill="#fff"/><path d="M1.5 2 V8.5 H12.5 V2" stroke="#fff" stroke-width="1.2" fill="none"/><path d="M4 4.5 H10" stroke="#fff"/><path d="M7 8.5 V12.5 M4 13 H10" stroke="#fff" stroke-width="1.2"/></svg>
<div style="left:1213px;top:822px;width:6px;height:2px;background:#fff;"></div>
<div style="left:1223px;top:823px;width:100px;height:1px;background:#fff;"></div>
<div style="left:1261px;top:818px;width:4px;height:12px;background:#fff;"></div>
<div style="left:1273px;top:820px;width:1px;height:6px;background:#fff;"></div>
<svg style="left:1326px;top:818px;" width="10" height="10" viewBox="0 0 10 10"><path d="M5 0.5 V9.5 M0.5 5 H9.5" stroke="#fff" stroke-width="2"/></svg>
<div class="t" style="left:1348.66px;top:817.80px;font-size:12px;line-height:12px;color:#fff;font-weight:normal;font-family:'Liberation Sans';letter-spacing:-0.551px;">80%</div>
<svg style="left:1384px;top:817px;" width="15" height="14" viewBox="0 0 15 14"><rect x="0.5" y="0.5" width="14" height="13" fill="none" stroke="#fff"/><path d="M7.5 2 V12 M2 7 H13" stroke="#fff" stroke-dasharray="1.5 1"/><path d="M3 4 L5 4 M3 4 L3 6 M12 4 L10 4 M12 4 L12 6 M3 10 L5 10 M3 10 L3 8 M12 10 L10 10 M12 10 L12 8" stroke="#fff"/></svg>
<svg style="left:53px;top:849px;" width="15" height="18" viewBox="0 0 15 18"><path d="M0 0 L14.5 8.7 L0 17.3Z" fill="#999"/></svg>
<svg style="left:84px;top:846px;" width="20" height="22" viewBox="0 0 20 22"><circle cx="10" cy="12" r="8" fill="none" stroke="#999" stroke-width="2.6"/><path d="M6 2.5 L11 0 L11 6Z" fill="#999"/><rect x="6" y="3" width="6" height="3" fill="#ebebeb"/><path d="M11 0.5 L6.5 3.5 L11 6.5Z" fill="#999"/><text x="10" y="15.5" text-anchor="middle" font-family="Liberation Sans" font-weight="bold" font-size="8.5" fill="#999">10</text></svg>
<svg style="left:118px;top:849px;" width="14" height="17" viewBox="0 0 14 17"><path d="M0 0 H9 L14 5 V17 H0Z" fill="#999"/><path d="M9 0 L14 5 H9Z" fill="#ebebeb"/><path d="M9.8 1 L13 4.2 H9.8Z" fill="#999"/><path d="M3 8 H11 M3 10.5 H11 M3 13 H11" stroke="#ebebeb" stroke-width="1.3"/></svg>
<svg style="left:147px;top:849px;" width="21" height="18" viewBox="0 0 21 18"><path d="M0 5 H4 L10 0 V17.5 L4 12.5 H0Z" fill="#999"/><path d="M12.5 5.5 Q15 8.75 12.5 12 M15 3 Q19.5 8.75 15 14.5" stroke="#999" stroke-width="1.8" fill="none"/></svg>
<div style="left:183px;top:856px;width:90px;height:3px;background:#68a9d1;border-radius:1px;"></div>
<div style="left:271px;top:852px;width:11px;height:11px;background:linear-gradient(#ddd,#c4c4c4);border:1px solid #777;box-sizing:border-box;box-shadow:0 1px 1px rgba(0,0,0,0.3);"></div>
<svg style="left:672px;top:844px;" width="24" height="25" viewBox="0 0 24 25"><path d="M6 1 H18 L23 6 V18 L18 23 H14 M10 23 H6 L1 18 V6 L6 1" fill="none" stroke="#aaa" stroke-width="1"/><path d="M8 4 V20 H13 M11 4 V17 M4 8 H8 M4 13 H8 M16 4 V20 M13 4 H19 M16 10 H20 Q22 12 20 15 H16 M7 24 H16" fill="none" stroke="#aaa" stroke-width="1.1"/></svg>
<div class="t" style="left:700.23px;top:844.65px;font-size:21px;line-height:21px;color:#a0a0a0;font-weight:normal;font-family:'Liberation Sans';transform:scaleX(0.9774);transform-origin:1.47px 0;-webkit-text-stroke:0.45px #ebebeb;">LaSkola</div>
<svg style="left:1282px;top:847px;" width="20" height="20" viewBox="0 0 20 20"><circle cx="10" cy="10" r="8.7" fill="none" stroke="#b3b3b3" stroke-width="1.8"/><path d="M10 4 V10.5 L13.5 14" stroke="#b3b3b3" stroke-width="1.8" fill="none"/></svg>
<div class="t" style="left:1309.08px;top:847.48px;font-size:17.5px;line-height:17.5px;color:#b0b0b0;font-weight:bold;font-family:'Liberation Serif';transform:scaleX(1.2663);transform-origin:1.23px 0;">09:07</div>
<svg style="left:1378px;top:849px;" width="17" height="17" viewBox="0 0 17 17"><path d="M1 5.5 V1 H5.5 M11.5 1 H16 V5.5 M16 11.5 V16 H11.5 M5.5 16 H1 V11.5" stroke="#999" stroke-width="2" fill="none"/></svg>
</body></html>
